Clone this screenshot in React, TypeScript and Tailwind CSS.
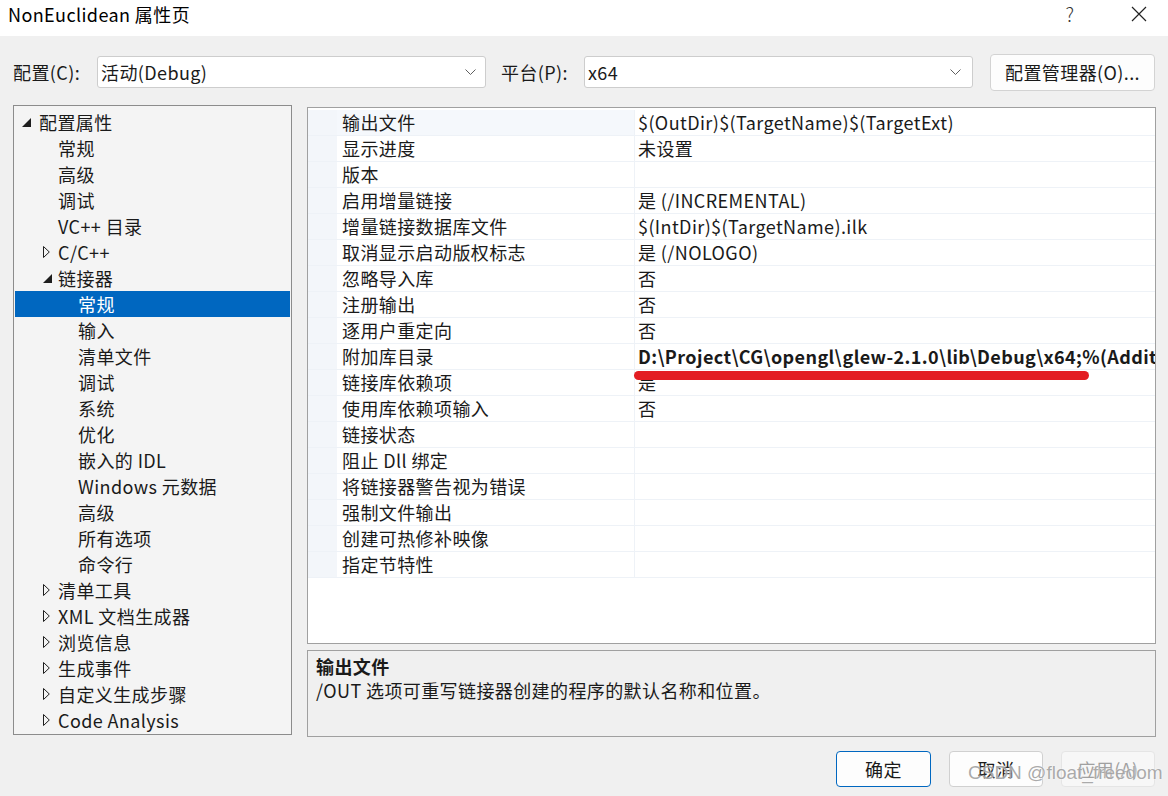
import React from 'react'

const font = { fontFamily: '"Noto Sans CJK SC", "Noto Sans", sans-serif' }

type TreeItem = { label: string; level: number; arrow?: 'open' | 'closed'; selected?: boolean }

const tree: TreeItem[] = [
  { label: '配置属性', level: 0, arrow: 'open' },
  { label: '常规', level: 1 },
  { label: '高级', level: 1 },
  { label: '调试', level: 1 },
  { label: 'VC++ 目录', level: 1 },
  { label: 'C/C++', level: 1, arrow: 'closed' },
  { label: '链接器', level: 1, arrow: 'open' },
  { label: '常规', level: 2, selected: true },
  { label: '输入', level: 2 },
  { label: '清单文件', level: 2 },
  { label: '调试', level: 2 },
  { label: '系统', level: 2 },
  { label: '优化', level: 2 },
  { label: '嵌入的 IDL', level: 2 },
  { label: 'Windows 元数据', level: 2 },
  { label: '高级', level: 2 },
  { label: '所有选项', level: 2 },
  { label: '命令行', level: 2 },
  { label: '清单工具', level: 1, arrow: 'closed' },
  { label: 'XML 文档生成器', level: 1, arrow: 'closed' },
  { label: '浏览信息', level: 1, arrow: 'closed' },
  { label: '生成事件', level: 1, arrow: 'closed' },
  { label: '自定义生成步骤', level: 1, arrow: 'closed' },
  { label: 'Code Analysis', level: 1, arrow: 'closed' },
]

const props: [string, string, boolean?][] = [
  ['输出文件', '$(OutDir)$(TargetName)$(TargetExt)'],
  ['显示进度', '未设置'],
  ['版本', ''],
  ['启用增量链接', '是 (/INCREMENTAL)'],
  ['增量链接数据库文件', '$(IntDir)$(TargetName).ilk'],
  ['取消显示启动版权标志', '是 (/NOLOGO)'],
  ['忽略导入库', '否'],
  ['注册输出', '否'],
  ['逐用户重定向', '否'],
  ['附加库目录', 'D:\\Project\\CG\\opengl\\glew-2.1.0\\lib\\Debug\\x64;%(AdditionalLibraryDirectories)', true],
  ['链接库依赖项', '是'],
  ['使用库依赖项输入', '否'],
  ['链接状态', ''],
  ['阻止 Dll 绑定', ''],
  ['将链接器警告视为错误', ''],
  ['强制文件输出', ''],
  ['创建可热修补映像', ''],
  ['指定节特性', ''],
]

function Chevron() {
  return (
    <svg width="11" height="6" viewBox="0 0 11 6" className="shrink-0">
      <path d="M0.5 0.5 L5.5 5.5 L10.5 0.5" fill="none" stroke="#5f5f5f" strokeWidth="1" />
    </svg>
  )
}

function Arrow({ kind }: { kind?: 'open' | 'closed' }) {
  if (kind === 'open')
    return (
      <svg width="9" height="9" viewBox="0 0 9 9">
        <polygon points="9,0 9,9 0,9" fill="#1e1e1e" />
      </svg>
    )
  if (kind === 'closed')
    return (
      <svg width="7" height="12" viewBox="0 0 7 12">
        <polygon points="0.5,0.5 6.3,6 0.5,11.5" fill="none" stroke="#1e1e1e" strokeWidth="1" />
      </svg>
    )
  return null
}

function App() {
  return (
    <div style={font} className="w-[1168px] h-[796px] bg-[#f0f0f0] flex flex-col overflow-hidden relative text-[#1a1a1a] text-[18px] tracking-[0.4px]">
      {/* Title bar */}
      <div className="h-[36px] bg-white flex items-start pt-[1px] pl-[8px] shrink-0">
        <div className="flex-1 h-[26px] flex items-center text-black">NonEuclidean 属性页</div>
        <div className="w-[40px] h-[26px] flex items-center justify-center text-[19px] font-light text-[#333] mr-[26px]">?</div>
        <div className="w-[46px] h-[26px] flex items-center justify-center mr-[6px]">
          <svg width="16" height="16" viewBox="0 0 16 16">
            <path d="M1 1 L15 15 M15 1 L1 15" stroke="#222" strokeWidth="1.2" />
          </svg>
        </div>
      </div>

      {/* Config row */}
      <div className="flex items-center mt-[17px] h-[38px] shrink-0">
        <div className="pl-[13px] w-[97px]">配置(C):</div>
        <div className="w-[389px] h-[32px] bg-white border border-[#cdcdcd] rounded-[3px] flex items-center pl-[3px] pr-[9px]">
          <span className="flex-1">活动(Debug)</span>
          <Chevron />
        </div>
        <div className="pl-[15px] w-[98px]">平台(P):</div>
        <div className="w-[389px] h-[32px] bg-white border border-[#cdcdcd] rounded-[3px] flex items-center pl-[3px] pr-[11px]">
          <span className="flex-1">x64</span>
          <Chevron />
        </div>
        <div className="ml-[17px] w-[165px] h-[37px] bg-[#fdfdfd] border border-[#d3d3d3] rounded-[4px] flex items-center justify-center">
          配置管理器(O)...
        </div>
      </div>

      {/* Main area */}
      <div className="flex mt-[14px] pl-[13px] h-[632px] shrink-0">
        {/* Tree */}
        <div className="w-[279px] h-[630px] border border-[#8c8c8c] bg-[#f4f4f4] pt-[3px] px-[1px]">
          {tree.map((t, i) => (
            <div
              key={i}
              className={`h-[26px] flex items-center ${t.selected ? 'bg-[#0067c0] text-white' : ''}`}
            >
              <div
                className={`shrink-0 flex items-center ${
                  t.level === 0 ? 'w-[24px] pl-[7px]' : t.level === 1 ? 'w-[43px] pl-[28px]' : 'w-[63px]'
                }`}
              >
                <Arrow kind={t.arrow} />
              </div>
              <span>{t.label}</span>
            </div>
          ))}
        </div>

        {/* Right column */}
        <div className="ml-[15px] w-[849px] flex flex-col mt-[2px]">
          <div className="h-[537px] border border-[#a0a0a0] bg-white overflow-hidden relative pt-[2px]">
            {props.map(([name, value, bold], i) => (
              <div key={i} className="h-[26px] flex border-b border-[#eef2f7]">
                <div className="w-[29px] bg-[#f3f6fa] shrink-0" />
                <div className={`w-[298px] shrink-0 pl-[5px] flex items-center border-r border-[#eef2f7] ${i === 0 ? 'bg-[#f5f8fc]' : ''}`}>
                  {name}
                </div>
                <div className={`flex-1 pl-[3px] flex items-center whitespace-nowrap overflow-hidden ${bold ? 'font-bold' : ''}`}>
                  {value}
                </div>
              </div>
            ))}
            <div className="absolute left-[326px] top-[263px] w-[455px] h-[9px] rounded-full bg-[#e31d22]" />
          </div>
          <div className="mt-[6px] h-[87px] border border-[#a0a0a0] pl-[8px] pt-[3px]">
            <div className="font-bold leading-[24px]">输出文件</div>
            <div className="leading-[24px]">/OUT 选项可重写链接器创建的程序的默认名称和位置。</div>
          </div>
        </div>
      </div>

      {/* Buttons */}
      <div className="flex mt-[14px] pl-[836px] gap-[18px] relative">
        <div className="w-[95px] h-[36px] bg-[#fdfdfd] border border-[#0067c0] rounded-[4px] flex items-center justify-center">确定</div>
        <div className="w-[94px] h-[36px] bg-[#fdfdfd] border border-[#d0d0d0] rounded-[4px] flex items-center justify-center">取消</div>
        <div className="w-[94px] h-[36px] bg-[#f7f7f7] border border-[#e5e5e5] rounded-[4px] flex items-center justify-center text-[#a0a0a0]">应用(A)</div>
        <div
          className="absolute left-[968px] top-[11px] text-[19px] leading-[22px] tracking-normal text-[#9b9b9b]/85 whitespace-nowrap [text-shadow:0_0_2px_#ffffff]"
          style={{ fontFamily: '"Liberation Sans", Arial, sans-serif' }}
        >
          CSDN @float_freedom
        </div>
      </div>
    </div>
  )
}

export default App
